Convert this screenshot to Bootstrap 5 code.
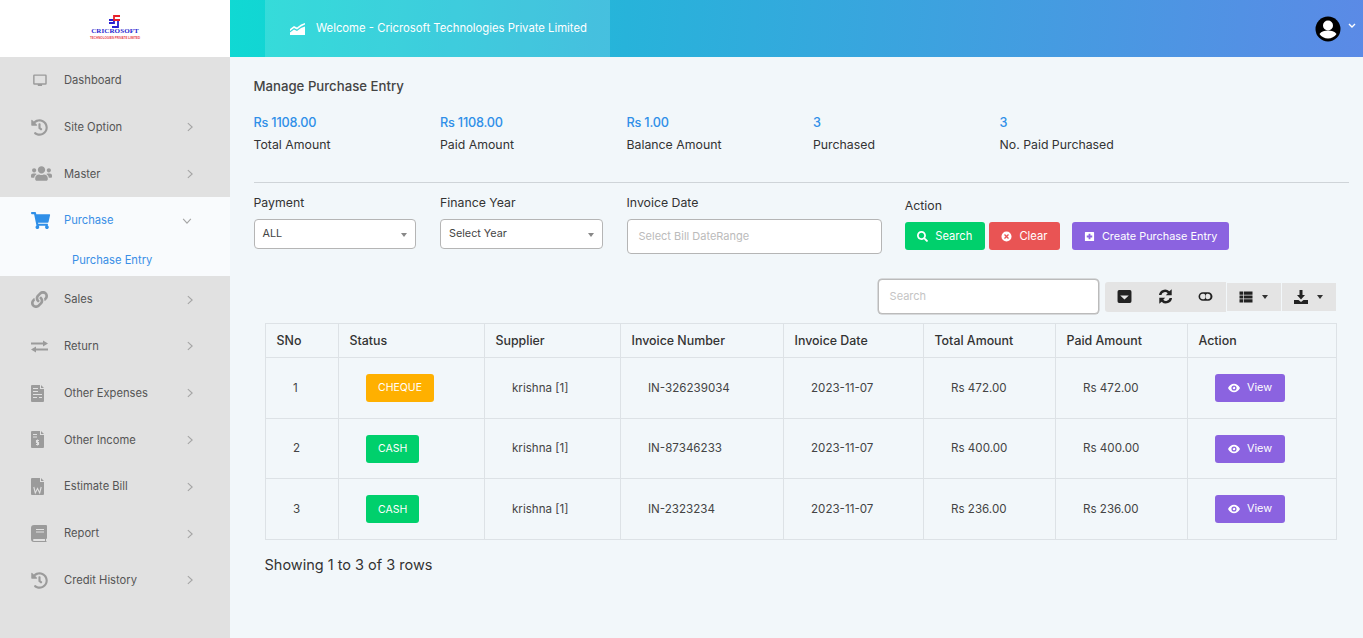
<!DOCTYPE html>
<html lang="en"><head><meta charset="utf-8"><title>Manage Purchase Entry</title>
<link href="https://cdn.jsdelivr.net/npm/bootstrap@5.3.0/dist/css/bootstrap.min.css" rel="stylesheet">
<style>
html,body{height:100%}
body{background:#f2f7fa;font-family:Inter,"Open Sans",sans-serif;color:#333;overflow:hidden;font-size:12px}
.app-wrap{height:638px}
.side{width:230px;flex:none;background:#e1e1e1}
.logo-box{height:57px;background:#fff}
.logo-in{width:50px;line-height:1;margin-top:-3px}
.logo-name{font:bold 7px "Liberation Serif",serif;color:#2a1fd0;letter-spacing:.1px;white-space:nowrap;margin-top:-1px}
.logo-sub{font:bold 3px "Liberation Sans",sans-serif;color:#e8404a;white-space:nowrap;margin-top:1px}
.side-item{height:46.8px;padding:0 37px 0 31px;color:#555;font-size:11.2px}
.side-item .nav-ic{width:21px;height:17px;fill:#9b9b9b;margin-right:12px;flex:none}
.side-item.on{color:#3a8fe6}
.side-item.on .nav-ic{fill:#2f8fe8}
.side-open{background:#f9fbfd}
.sub-item{height:32px;padding-left:72px;color:#3a8fe6;font-size:11.2px}
.chev{width:6px;height:10px;stroke:#a5a5a5;stroke-width:1.3;fill:none;margin-left:auto}
.chev-d{width:10px;height:6px;margin-right:1px}
.top{height:57px;background:linear-gradient(95deg,#10d9d3 0%,#27b3da 35%,#5b8ae6 100%);padding-left:35px;padding-right:8px}
.welcome{width:345px;height:57px;background:rgba(255,255,255,.15);color:#fff;padding-left:25px;font-size:11.3px}
.welcome svg{width:15px;height:12px;fill:#fff;margin-right:11px}
.content{padding:0 15px 0 23.5px}
.page-h{font-size:13.2px;font-weight:500;color:#444;margin:0;padding-top:20px;height:55px;line-height:18px}
.stat-v{color:#2f8fe8;font-size:12.7px;font-weight:500;line-height:20px;letter-spacing:-.2px;padding-top:1px}
.stat-l{color:#333;font-size:12.3px;line-height:20px;margin-top:2px}
.stats{height:70px}
.sep{margin:0 0 10px;border-color:#cfd4d8;opacity:1}
.lab{font-size:12.3px;line-height:20px;margin-bottom:6px;color:#333}
.sel{height:30px;border:1px solid #b5b5b5;border-radius:4px;background:#fff;padding:1px 8px 0;color:#444;font-size:10.8px}
.caret{width:0;height:0;border:3px solid transparent;border-top:4px solid #888;border-bottom:0;margin-left:auto}
.inp{height:35px;border:1px solid #b5b5b5;border-radius:4px;background:#fff;padding:0 11px;color:#bbb;font-size:11px}
.act-col{padding-top:3px}
.act-col .lab{margin-bottom:6px;margin-left:-1.5px}
.act-row{margin-left:-1.5px}
.act-btn{height:28px;padding:0 12.5px;font-size:11.2px;color:#fff;border:0;border-radius:3px;line-height:28px;display:inline-flex;align-items:center;--bs-btn-hover-color:#fff}
.act-btn svg{width:11px;height:11px;fill:#fff;margin-right:7px}
.wide-btn{padding:0 12px;font-size:10.9px}
.g-b{background:#00d06c}.r-b{background:#e95454}.p-b{background:#8b63e0}.y-b{background:#ffb000}
.bars{padding:0 13px 0 0;margin-top:25px}
.tsearch{width:221px;height:35px;border:1px solid #bbb;box-shadow:0 0 0 .5px #bbb;border-radius:4px;background:#fff;padding:0 11px;color:#c4c4c4;font-size:11px;margin-right:6px}
.tools{height:30px;background:#e4e4e4;border-radius:3px 0 0 3px}
.tool{width:40.3px;height:30px}
.tool svg{width:15px;height:15px;fill:#222}
.tool2{height:28px;width:54px;background:#e4e4e4;margin-left:1px;padding:0 12px;gap:9px}
.tool2 svg{width:14px;height:14px;fill:#222}
.tool2 .caret{border-top-color:#333;margin:0}
.wrap-t{padding:0 12px 0 11px;margin-top:9px}
.tbl{table-layout:fixed;width:1072px;margin:0;--bs-table-bg:transparent;border-color:#dde2e6;font-size:11.6px;color:#333}
.tbl th{height:34px;padding:2px 11px 0;font-weight:500;font-size:12.4px;vertical-align:middle}
.tbl td{height:60.6px;padding:1px 0 0 27.5px;vertical-align:middle;color:#444}
.c1{width:73px}.c2{width:146px}.c3{width:136px}.c4{width:163px}.c5{width:140px}.c6{width:132px}.c7{width:132px}
.pill{height:28px;padding:0 12px;font-size:10.5px;color:#fff;border-radius:3px;display:inline-flex;align-items:center}
.view{padding:0 12px 0 12px;font-size:10.8px}
.view svg{width:12px;height:12px;fill:#fff;margin-right:7px}
.view:hover{color:#fff}
.foot{font-size:14.5px;margin:14px 0 0;color:#333}
.user{width:26px;height:26px}
.ch-w{width:8px;height:5px;stroke:#fff;stroke-width:1.4;fill:none;margin-left:7px;margin-bottom:6px}
.ic-cut{fill:none;stroke:#e1e1e1;stroke-width:1.1}
</style></head><body>
<svg width="0" height="0" class="position-absolute">
<symbol id="i-hist" viewBox="0 0 512 512" preserveAspectRatio="xMinYMid"><path d="M504 255.531c.253 136.64-111.18 248.372-247.82 248.468-59.015.042-113.223-20.53-155.822-54.911-11.077-8.94-11.905-25.541-1.839-35.607l11.267-11.267c8.609-8.609 22.353-9.551 31.891-1.984C173.062 425.135 212.781 440 256 440c101.705 0 184-82.311 184-184 0-101.705-82.311-184-184-184-48.814 0-93.149 18.969-126.068 49.932l50.754 50.754c10.08 10.08 2.941 27.314-11.313 27.314H24c-8.837 0-16-7.163-16-16V38.627c0-14.254 17.234-21.393 27.314-11.314l49.372 49.372C129.209 34.136 189.552 8 256 8c136.81 0 247.747 110.78 248 247.531zm-180.912 78.784l9.823-12.63c8.138-10.463 6.253-25.542-4.21-33.679L288 256.349V152c0-13.255-10.745-24-24-24h-16c-13.255 0-24 10.745-24 24v135.651l65.409 50.874c10.463 8.137 25.541 6.253 33.679-4.21z"/></symbol>
<symbol id="i-desk" viewBox="-1 -2 23 20" preserveAspectRatio="xMinYMid"><path fill-rule="evenodd" d="M3 1h13a1.500 1.500 0 0 1 1.500 1.500v9A1.500 1.500 0 0 1 16 13h-4v1.500H7V13H3a1.500 1.500 0 0 1-1.500-1.500v-9A1.500 1.500 0 0 1 3 1zm.2 1.500v8.800h12.600V2.500z"/></symbol>
<symbol id="i-users" viewBox="0 0 640 512" preserveAspectRatio="xMinYMid"><path d="M96 224c35.300 0 64-28.700 64-64s-28.700-64-64-64-64 28.700-64 64 28.700 64 64 64zm448 0c35.300 0 64-28.700 64-64s-28.700-64-64-64-64 28.700-64 64 28.700 64 64 64zm32 32h-64c-17.600 0-33.500 7.100-45.100 18.600 40.300 22.100 68.900 62 75.100 109.400h66c17.700 0 32-14.300 32-32v-32c0-35.300-28.700-64-64-64zm-256 0c61.900 0 112-50.100 112-112S381.900 32 320 32 208 82.100 208 144s50.100 112 112 112zm76.800 32h-8.300c-20.800 10-43.900 16-68.500 16s-47.600-6-68.500-16h-8.300C179.600 288 128 339.600 128 403.200V432c0 26.500 21.500 48 48 48h288c26.500 0 48-21.500 48-48v-28.800c0-63.600-51.600-115.200-115.200-115.200zm-223.700-13.400C161.500 263.100 145.600 256 128 256H64c-35.300 0-64 28.700-64 64v32c0 17.700 14.300 32 32 32h65.900c6.300-47.400 34.900-87.300 75.200-109.400z"/></symbol>
<symbol id="i-cart" viewBox="0 0 576 512" preserveAspectRatio="xMinYMid"><path d="M528.120 301.319l47.273-208C578.806 78.301 567.391 64 551.990 64H159.208l-9.166-44.810C147.758 8.021 137.930 0 126.529 0H24C10.745 0 0 10.745 0 24v16c0 13.255 10.745 24 24 24h69.883l70.248 343.435C147.325 417.100 136 435.222 136 456c0 30.928 25.072 56 56 56s56-25.072 56-56c0-15.674-6.447-29.835-16.824-40h209.647C430.447 426.165 424 440.326 424 456c0 30.928 25.072 56 56 56s56-25.072 56-56c0-22.172-12.888-41.332-31.579-50.405l5.517-24.276c3.413-15.018-8.002-29.319-23.403-29.319H218.117l-6.545-32h293.145c11.206 0 20.920-7.754 23.403-18.681z"/></symbol>
<symbol id="i-link" viewBox="0 0 512 512" preserveAspectRatio="xMinYMid"><path d="M326.612 185.391c59.747 59.809 58.927 155.698.36 214.590-.11.12-.24.25-.36.37l-67.200 67.200c-59.270 59.270-155.699 59.262-214.960 0-59.270-59.260-59.270-155.700 0-214.960l37.106-37.106c9.840-9.840 26.786-3.300 27.294 10.606.648 17.722 3.826 35.527 9.690 52.721 1.986 5.822.567 12.262-3.783 16.612l-13.087 13.087c-28.026 28.026-28.905 73.660-1.155 101.960 28.024 28.579 74.086 28.749 102.325.51l67.200-67.190c28.191-28.191 28.073-73.757 0-101.830-3.701-3.694-7.429-6.564-10.341-8.569a16.037 16.037 0 0 1-6.947-12.606c-.396-10.567 3.348-21.456 11.698-29.806l21.054-21.055c5.521-5.521 14.182-6.199 20.584-1.731a152.482 152.482 0 0 1 20.522 17.197zM467.547 44.449c-59.261-59.262-155.690-59.270-214.960 0l-67.200 67.200c-.12.12-.25.25-.36.37-58.566 58.892-59.387 154.781.36 214.590a152.454 152.454 0 0 0 20.521 17.196c6.402 4.468 15.064 3.789 20.584-1.731l21.054-21.055c8.350-8.350 12.094-19.239 11.698-29.806a16.037 16.037 0 0 0-6.947-12.606c-2.912-2.005-6.640-4.875-10.341-8.569-28.073-28.073-28.191-73.639 0-101.830l67.200-67.190c28.239-28.239 74.300-28.069 102.325.51 27.750 28.300 26.872 73.934-1.155 101.960l-13.087 13.087c-4.350 4.350-5.769 10.790-3.783 16.612 5.864 17.194 9.042 34.999 9.690 52.721.509 13.906 17.454 20.446 27.294 10.606l37.106-37.106c59.271-59.259 59.271-155.699.001-214.959z"/></symbol>
<symbol id="i-swap" viewBox="0 -2.500 21 17" preserveAspectRatio="xMinYMid"><path d="M12 0l5 3-5 3V4H0V2h12zM5 6v2h12v2H5v2L0 9z"/></symbol>
<symbol id="i-doc1" viewBox="1 0 19 17" preserveAspectRatio="xMinYMid"><path fill-rule="evenodd" d="M2 0h8v4h4v12a1 1 0 0 1-1 1H2a1 1 0 0 1-1-1V1a1 1 0 0 1 1-1zm9 0l3 3h-3zM3 3v1h5V3zm0 3v1h5V6zm0 3v1h9V9zm6 3v1h3v-1zM3 12v1h4v-1z"/></symbol>
<symbol id="i-doc2" viewBox="1 0 19 17" preserveAspectRatio="xMinYMid"><path fill-rule="evenodd" d="M2 0h8v4h4v12a1 1 0 0 1-1 1H2a1 1 0 0 1-1-1V1a1 1 0 0 1 1-1zm9 0l3 3h-3zM3 3v1h4V3zm0 2.500v1h4v-1z"/><path class="ic-cut" d="M9 9.500H6.500v2h2v2H6M7.500 8.500v6"/></symbol>
<symbol id="i-doc3" viewBox="1 0 19 17" preserveAspectRatio="xMinYMid"><path fill-rule="evenodd" d="M2 0h8v4h4v12a1 1 0 0 1-1 1H2a1 1 0 0 1-1-1V1a1 1 0 0 1 1-1zm9 0l3 3h-3z"/><path class="ic-cut" d="M3.800 9l1.500 6 2.200-4.500L9.700 15l1.500-6"/></symbol>
<symbol id="i-book" viewBox="0 0 16 17" preserveAspectRatio="xMinYMid"><path fill-rule="evenodd" d="M3 0h12a1 1 0 0 1 1 1v12a1 1 0 0 1-1 1v2h.5v1H3a3 3 0 0 1-3-3V3a3 3 0 0 1 3-3zm2 4v1h8V4zm0 2.500v1h8v-1zM3 14a1 1 0 0 0 0 2h11v-2z"/></symbol>
<symbol id="i-chart" viewBox="0 0 15 12"><path d="M0 6l4-3 3 1.500L11 1.500 15 0v1.500L11 3.500 7 6.500 4 5 0 8zM0 9.500l4-3 3 1.500 4-3 4-1.500V12H0z"/></symbol>
<symbol id="i-search" viewBox="0 0 512 512"><path d="M505 442.700L405.300 343c-4.500-4.500-10.600-7-17-7H372c27.600-35.300 44-79.700 44-128C416 93.100 322.900 0 208 0S0 93.100 0 208s93.100 208 208 208c48.300 0 92.700-16.400 128-44v16.300c0 6.400 2.500 12.500 7 17l99.700 99.700c9.400 9.400 24.600 9.400 33.900 0l28.300-28.300c9.400-9.400 9.400-24.600.1-34zM208 336c-70.700 0-128-57.200-128-128 0-70.700 57.200-128 128-128 70.700 0 128 57.200 128 128 0 70.700-57.200 128-128 128z"/></symbol>
<symbol id="i-xc" viewBox="0 0 12 12"><path fill-rule="evenodd" d="M6 .5a5.500 5.500 0 1 1 0 11 5.500 5.500 0 0 1 0-11zM4.300 3.300l-1 1L5 6 3.300 7.700l1 1L6 7l1.700 1.700 1-1L7 6l1.700-1.700-1-1L6 5z"/></symbol>
<symbol id="i-plus" viewBox="0 0 12 12"><path fill-rule="evenodd" d="M1.500 1h9a.5.500 0 0 1 .5.500v9a.5.500 0 0 1-.5.500h-9a.5.500 0 0 1-.5-.5v-9a.5.500 0 0 1 .5-.5zM5 3v2H3v2h2v2h2V7h2V5H7V3z"/></symbol>
<symbol id="i-eye" viewBox="0 0 14 10"><path fill-rule="evenodd" d="M7 0c3 0 5.500 2.200 7 5-1.500 2.800-4 5-7 5S1.500 7.800 0 5c1.500-2.800 4-5 7-5zm0 2a3 3 0 1 0 0 6 3 3 0 0 0 0-6zm0 1.500a1.500 1.500 0 1 1-1.500 1.500c0-.3.100-.5.200-.7.500.2 1-.3.800-.8.200 0 .3 0 .5 0z"/></symbol>
<symbol id="i-box" viewBox="0 0 14 14"><path fill-rule="evenodd" d="M2 1h10a1.500 1.500 0 0 1 1.500 1.500v9A1.500 1.500 0 0 1 12 13H2a1.500 1.500 0 0 1-1.500-1.500v-9A1.500 1.500 0 0 1 2 1zm1 5l4 3.800L11 6z"/></symbol>
<symbol id="i-sync" viewBox="0 0 14 14"><path d="M12.800 .3v5.500H7.300l1.800-1.800A3.400 3.400 0 0 0 3.200 5.700H.9a5.700 5.700 0 0 1 9.700-3.500zM1.200 13.700V8.200h5.500l-1.800 1.800A3.400 3.400 0 0 0 10.800 8.300h2.300a5.700 5.700 0 0 1-9.700 3.500z"/></symbol>
<symbol id="i-tog" viewBox="0 0 14 14"><path fill-rule="evenodd" d="M4.500 3h5a4 4 0 0 1 0 8h-5a4 4 0 0 1 0-8zm0 1.500a2.500 2.500 0 0 0 0 5c1.200 0 2-.5 2.400-1.200a3.800 3.800 0 0 1 0-2.600C6.500 5 5.700 4.500 4.500 4.500zm4.600 0c-.8 0-1.500.3-1.600.9a3 3 0 0 0 0 3.200c.1.600.8.900 1.600.9a2.500 2.500 0 0 0 0-5z"/></symbol>
<symbol id="i-grid" viewBox="0 0 14 14"><path d="M.5 1.500h3.800v3.200H.5zM5 1.500h8.500v3.200H5zM.5 5.400h3.800v3.200H.5zM5 5.400h8.500v3.200H5zM.5 9.300h3.800v3.200H.5zM5 9.300h8.500v3.200H5z"/></symbol>
<symbol id="i-dl" viewBox="0 0 14 14"><path d="M5.500 0h3v5h2.500L7 9.500 3 5h2.500zM0 10h4.500L7 12l2.500-2H14v4H0z"/></symbol>
</svg>
<div class="app-wrap d-flex">
<aside class="side d-flex flex-column">
<div class="logo-box d-flex justify-content-center align-items-center">
<div class="logo-in text-center">
<svg width="12" height="13" viewBox="0 0 12 13" class="d-block mx-auto"><path fill="none" stroke="#2a1fd0" stroke-width="1.800" d="M0 5h5v3H0M9 5v7H3"/><path fill="none" stroke="#e8202a" stroke-width="1.800" d="M11 1H5v4h6"/></svg>
<div class="logo-name">CRICROSOFT</div><div class="logo-sub">TECHNOLOGIES PRIVATE LIMITED</div>
</div></div>
<div class="side-item d-flex align-items-center"><svg class="nav-ic"><use href="#i-desk"/></svg>Dashboard</div>
<div class="side-item d-flex align-items-center"><svg class="nav-ic"><use href="#i-hist"/></svg>Site Option<svg class="chev" viewBox="0 0 7 11"><path d="M1 1l5 4.500L1 10"/></svg></div>
<div class="side-item d-flex align-items-center"><svg class="nav-ic"><use href="#i-users"/></svg>Master<svg class="chev" viewBox="0 0 7 11"><path d="M1 1l5 4.500L1 10"/></svg></div>
<div class="side-open">
<div class="side-item on d-flex align-items-center"><svg class="nav-ic"><use href="#i-cart"/></svg>Purchase<svg class="chev chev-d" viewBox="0 0 11 7"><path d="M1 1l4.500 5L10 1"/></svg></div>
<div class="sub-item d-flex align-items-center">Purchase Entry</div>
</div>
<div class="side-item d-flex align-items-center"><svg class="nav-ic"><use href="#i-link"/></svg>Sales<svg class="chev" viewBox="0 0 7 11"><path d="M1 1l5 4.500L1 10"/></svg></div>
<div class="side-item d-flex align-items-center"><svg class="nav-ic"><use href="#i-swap"/></svg>Return<svg class="chev" viewBox="0 0 7 11"><path d="M1 1l5 4.500L1 10"/></svg></div>
<div class="side-item d-flex align-items-center"><svg class="nav-ic"><use href="#i-doc1"/></svg>Other Expenses<svg class="chev" viewBox="0 0 7 11"><path d="M1 1l5 4.500L1 10"/></svg></div>
<div class="side-item d-flex align-items-center"><svg class="nav-ic"><use href="#i-doc2"/></svg>Other Income<svg class="chev" viewBox="0 0 7 11"><path d="M1 1l5 4.500L1 10"/></svg></div>
<div class="side-item d-flex align-items-center"><svg class="nav-ic"><use href="#i-doc3"/></svg>Estimate Bill<svg class="chev" viewBox="0 0 7 11"><path d="M1 1l5 4.500L1 10"/></svg></div>
<div class="side-item d-flex align-items-center"><svg class="nav-ic"><use href="#i-book"/></svg>Report<svg class="chev" viewBox="0 0 7 11"><path d="M1 1l5 4.500L1 10"/></svg></div>
<div class="side-item d-flex align-items-center"><svg class="nav-ic"><use href="#i-hist"/></svg>Credit History<svg class="chev" viewBox="0 0 7 11"><path d="M1 1l5 4.500L1 10"/></svg></div>
</aside>
<main class="flex-grow-1">
<header class="top d-flex align-items-center justify-content-between">
<div class="welcome d-flex align-items-center"><svg><use href="#i-chart"/></svg>Welcome - Cricrosoft Technologies Private Limited</div>
<div class="d-flex align-items-center"><svg class="user" viewBox="0 0 26 26"><circle cx="13" cy="13" r="12.500" fill="#000"/><circle cx="13" cy="9.500" r="5" fill="#fff"/><path fill="#fff" d="M4.500 18c2-3 5-3.500 8.500-3.500s6.500.5 8.500 3.500c-2 2.800-5 4.500-8.500 4.500S6.500 20.800 4.500 18z"/></svg><svg class="ch-w" viewBox="0 0 8 5"><path d="M1 1l3 3 3-3"/></svg></div>
</header>
<div class="content">
<h1 class="page-h">Manage Purchase Entry</h1>
<div class="row stats">
<div class="col-2"><div class="stat-v">Rs 1108.00</div><div class="stat-l">Total Amount</div></div>
<div class="col-2"><div class="stat-v">Rs 1108.00</div><div class="stat-l">Paid Amount</div></div>
<div class="col-2"><div class="stat-v">Rs 1.00</div><div class="stat-l">Balance Amount</div></div>
<div class="col-2"><div class="stat-v">3</div><div class="stat-l">Purchased</div></div>
<div class="col-2"><div class="stat-v">3</div><div class="stat-l">No. Paid Purchased</div></div>
</div>
<hr class="sep">
<div class="row">
<div class="col-2"><div class="lab">Payment</div><div class="sel d-flex align-items-center">ALL<span class="caret"></span></div></div>
<div class="col-2"><div class="lab">Finance Year</div><div class="sel d-flex align-items-center">Select Year<span class="caret"></span></div></div>
<div class="col-3"><div class="lab">Invoice Date</div><div class="inp d-flex align-items-center">Select Bill DateRange</div></div>
<div class="col-5 act-col"><div class="lab">Action</div>
<div class="d-flex gap-1 act-row">
<button class="btn act-btn g-b"><svg><use href="#i-search"/></svg>Search</button>
<button class="btn act-btn r-b"><svg><use href="#i-xc"/></svg>Clear</button>
<button class="btn act-btn wide-btn p-b ms-2"><svg><use href="#i-plus"/></svg>Create Purchase Entry</button>
</div></div>
</div>
<div class="bars d-flex justify-content-end align-items-center">
<div class="tsearch d-flex align-items-center">Search</div>
<div class="tools d-flex">
<div class="tool d-flex align-items-center justify-content-center"><svg><use href="#i-box"/></svg></div>
<div class="tool d-flex align-items-center justify-content-center"><svg><use href="#i-sync"/></svg></div>
<div class="tool d-flex align-items-center justify-content-center"><svg><use href="#i-tog"/></svg></div>
</div>
<div class="tool2 d-flex align-items-center"><svg><use href="#i-grid"/></svg><span class="caret"></span></div>
<div class="tool2 d-flex align-items-center"><svg><use href="#i-dl"/></svg><span class="caret"></span></div>
</div>
<div class="wrap-t">
<table class="table table-bordered tbl">
<thead><tr><th class="c1">SNo</th><th class="c2">Status</th><th class="c3">Supplier</th><th class="c4">Invoice Number</th><th class="c5">Invoice Date</th><th class="c6">Total Amount</th><th class="c7">Paid Amount</th><th>Action</th></tr></thead>
<tbody>
<tr><td>1</td><td><span class="pill y-b">CHEQUE</span></td><td>krishna [1]</td><td>IN-326239034</td><td>2023-11-07</td><td>Rs 472.00</td><td>Rs 472.00</td><td><button class="btn pill view p-b"><svg><use href="#i-eye"/></svg>View</button></td></tr>
<tr><td>2</td><td><span class="pill g-b">CASH</span></td><td>krishna [1]</td><td>IN-87346233</td><td>2023-11-07</td><td>Rs 400.00</td><td>Rs 400.00</td><td><button class="btn pill view p-b"><svg><use href="#i-eye"/></svg>View</button></td></tr>
<tr><td>3</td><td><span class="pill g-b">CASH</span></td><td>krishna [1]</td><td>IN-2323234</td><td>2023-11-07</td><td>Rs 236.00</td><td>Rs 236.00</td><td><button class="btn pill view p-b"><svg><use href="#i-eye"/></svg>View</button></td></tr>
</tbody></table>
<div class="foot">Showing 1 to 3 of 3 rows</div>
</div>
</div>
</main>
</div>
<script src="https://cdn.jsdelivr.net/npm/bootstrap@5.3.0/dist/js/bootstrap.bundle.min.js"></script>
</body></html>
